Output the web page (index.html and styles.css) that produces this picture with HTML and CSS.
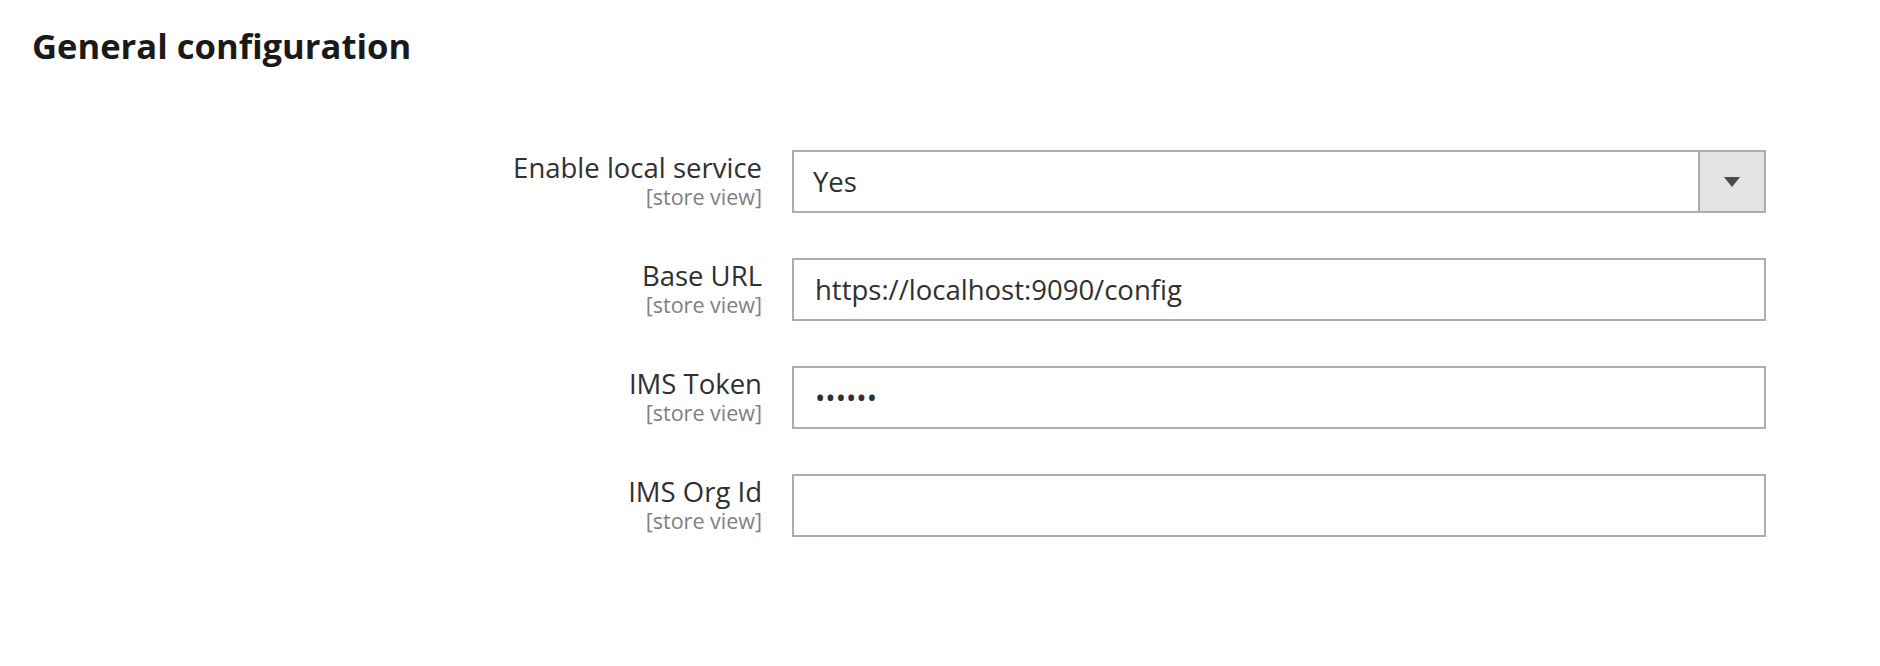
FILE: index.html
```html
<!DOCTYPE html>
<html lang="en">
<head>
<meta charset="utf-8">
<title>General configuration</title>
<link rel="stylesheet" href="styles.css">
</head>
<body>
<div class="page">
  <h1 class="section-title">General configuration</h1>
  <div class="form">
    <div class="row">
      <div class="label">
        <span class="label-text">Enable local service</span>
        <span class="scope">[store view]</span>
      </div>
      <div class="control">
        <div class="select-wrap">
          <select class="select">
            <option>Yes</option>
            <option>No</option>
          </select>
          <span class="select-btn"><span class="arrow"></span></span>
        </div>
      </div>
    </div>
    <div class="row">
      <div class="label">
        <span class="label-text">Base URL</span>
        <span class="scope">[store view]</span>
      </div>
      <div class="control">
        <input class="input" type="text" value="https://localhost:9090/config">
      </div>
    </div>
    <div class="row">
      <div class="label">
        <span class="label-text">IMS Token</span>
        <span class="scope">[store view]</span>
      </div>
      <div class="control">
        <input class="input" type="password" value="abcdef">
      </div>
    </div>
    <div class="row">
      <div class="label">
        <span class="label-text">IMS Org Id</span>
        <span class="scope">[store view]</span>
      </div>
      <div class="control">
        <input class="input" type="text" value="">
      </div>
    </div>
  </div>
</div>
</body>
</html>
```

FILE: styles.css
```css
html, body {
  margin: 0;
  padding: 0;
  background: #ffffff;
}

body {
  font-family: "Open Sans", "Noto Sans", "Liberation Sans", sans-serif;
  color: #303030;
}

.page {
  padding: 22px 0 0 32px;
}

.section-title {
  margin: 0;
  font-size: 34.6px;
  font-weight: 700;
  line-height: 48px;
  color: #1a1a1a;
}

.form {
  display: flex;
  flex-direction: column;
  gap: 45px;
  padding-top: 80px;
}

.row {
  display: flex;
  align-items: flex-start;
  gap: 30px;
}

.label {
  width: 730px;
  padding-top: 2px;
  display: flex;
  flex-direction: column;
  align-items: flex-end;
  text-align: right;
}

.label-text {
  font-size: 27.5px;
  line-height: 32px;
  color: #303030;
}

.scope {
  font-size: 21.5px;
  line-height: 26px;
  color: #808080;
}

.control {
  width: 974px;
}

.input,
.select-wrap {
  box-sizing: border-box;
  width: 100%;
  height: 63px;
  border: 2px solid #adadad;
  background: #ffffff;
}

.input {
  display: block;
  padding: 0 21px;
  font-family: inherit;
  font-size: 27.5px;
  color: #303030;
  outline: none;
}

.select-wrap {
  display: flex;
}

.select {
  flex: 1;
  appearance: none;
  -webkit-appearance: none;
  border: 0;
  background: transparent;
  padding: 0 19px;
  font-family: inherit;
  font-size: 27.5px;
  color: #303030;
  outline: none;
}

.select-btn {
  box-sizing: border-box;
  width: 66px;
  border-left: 2px solid #adadad;
  background: #e3e3e3;
  display: flex;
  align-items: center;
  justify-content: center;
}

.arrow {
  width: 0;
  height: 0;
  border-left: 8px solid transparent;
  border-right: 8px solid transparent;
  border-top: 10px solid #514943;
}
```
